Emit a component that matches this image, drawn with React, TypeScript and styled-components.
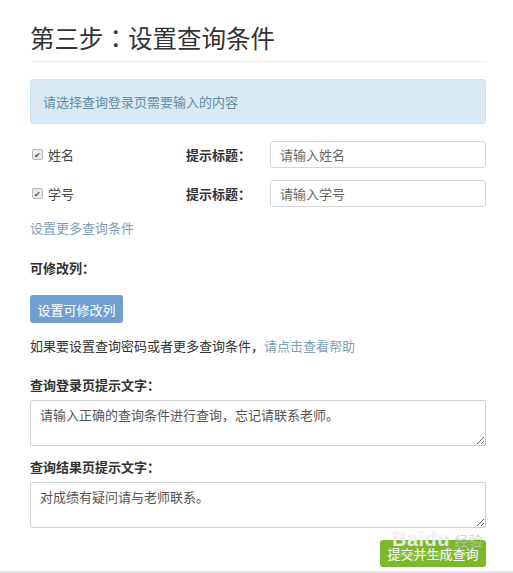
import React from "react";
import styled, { createGlobalStyle } from "styled-components";

const GlobalStyle = createGlobalStyle`
  body {
    margin: 0;
    background: #fff;
    font-family: "Noto Sans CJK SC", "Noto Sans", sans-serif;
    color: #333;
  }
`;

const Page = styled.div`
  position: relative;
  width: 513px;
  height: 573px;
  overflow: hidden;
  box-sizing: border-box;
  padding: 0 27px 0 30px;
  border-bottom: 2px solid #e3e3e3;
`;

const Title = styled.h1`
  margin: 20px 0 0;
  font-size: 24.5px;
  font-weight: 400;
  line-height: 36px;
  color: #333;
`;

const TitleColon = styled.span`
  font-family: "Noto Sans CJK TC", "Noto Sans CJK SC", sans-serif;
`;

const Divider = styled.hr`
  margin: 5px 0 0 2px;
  border: 0;
  border-top: 1px solid #ececec;
`;

const Alert = styled.div`
  margin-top: 17px;
  height: 45px;
  box-sizing: border-box;
  padding: 0 12px;
  display: flex;
  align-items: center;
  background: #daeaf4;
  border: 1px solid #cfe3ee;
  border-radius: 3px;
  color: #5f8ea6;
  font-size: 13px;
`;

const FieldRow = styled.div<{ $top: number }>`
  margin-top: ${(p) => p.$top}px;
  display: grid;
  grid-template-columns: 156px 84px 1fr;
  align-items: center;
  height: 26px;
`;

const CheckLabel = styled.label`
  display: flex;
  align-items: center;
  gap: 5px;
  font-size: 13px;
  color: #444;
  padding-left: 2px;
`;

const Check = styled.span`
  width: 9px;
  height: 9px;
  border: 1px solid #b9b9b9;
  border-radius: 2px;
  background: #e9e9e9;
  display: flex;
  align-items: center;
  justify-content: center;
  font-size: 8px;
  line-height: 1;
  color: #555;
`;

const HintLabel = styled.span`
  font-size: 13px;
  font-weight: 700;
  color: #333;
`;

const TextInput = styled.input`
  height: 27px;
  box-sizing: border-box;
  border: 1px solid #d6d6d6;
  border-radius: 3px;
  padding: 0 9px;
  font-family: inherit;
  font-size: 13px;
  color: #555;
  outline: none;
  &::placeholder {
    color: #666;
  }
`;

const LinkText = styled.a<{ $block?: boolean }>`
  color: #7c9fba;
  font-size: 13px;
  text-decoration: none;
  display: ${(p) => (p.$block ? "block" : "inline")};
`;

const MoreLink = styled(LinkText)`
  margin-top: 13px;
  line-height: 18px;
`;

const SectionLabel = styled.div<{ $top: number }>`
  margin-top: ${(p) => p.$top}px;
  font-size: 13px;
  font-weight: 700;
  line-height: 18px;
  color: #333;
`;

const BlueButton = styled.button`
  margin-top: 18px;
  width: 93px;
  height: 28px;
  border: 0;
  border-radius: 3px;
  background: #729fd2;
  color: #fff;
  font-family: inherit;
  font-size: 13px;
  padding: 0;
  display: block;
`;

const HelpLine = styled.p`
  margin: 14px 0 0;
  font-size: 13px;
  line-height: 18px;
  color: #333;
`;

const Area = styled.textarea<{ $top: number }>`
  display: block;
  margin-top: ${(p) => p.$top}px;
  width: 100%;
  height: 46px;
  box-sizing: border-box;
  border: 1px solid #d2d2d2;
  border-radius: 2px;
  padding: 5px 9px;
  font-family: inherit;
  font-size: 13px;
  line-height: 18px;
  color: #555;
  resize: vertical;
  outline: none;
`;

const Footer = styled.div`
  margin-top: 12px;
  display: flex;
  justify-content: flex-end;
`;

const GreenButton = styled.button`
  width: 106px;
  height: 27px;
  border: 0;
  border-radius: 3px;
  background: #7bb82c;
  color: #fff;
  font-family: inherit;
  font-size: 13px;
  padding: 0;
`;

const Watermark = styled.div`
  position: absolute;
  left: 392px;
  top: 529px;
  color: rgba(255, 255, 255, 0.75);
  font-family: "Liberation Sans", sans-serif;
  pointer-events: none;
  line-height: 1;
  & b {
    font-size: 20px;
    font-weight: 700;
    letter-spacing: 0.5px;
    text-shadow: 0 0 1px rgba(170, 170, 170, 0.6);
  }
  & span {
    font-size: 14px;
    color: rgba(200, 200, 200, 0.8);
    font-family: "Noto Sans CJK SC", sans-serif;
  }
  & small {
    position: absolute;
    left: 6px;
    top: 21px;
    font-size: 9px;
    color: rgba(210, 230, 200, 0.55);
    white-space: nowrap;
  }
`;

const fields = [
  { name: "姓名", placeholder: "请输入姓名", top: 17 },
  { name: "学号", placeholder: "请输入学号", top: 13 },
];

export default function App() {
  return (
    <Page>
      <GlobalStyle />
      <Title>
        第三步<TitleColon>：</TitleColon>设置查询条件
      </Title>
      <Divider />
      <Alert>请选择查询登录页需要输入的内容</Alert>
      {fields.map((f) => (
        <FieldRow key={f.name} $top={f.top}>
          <CheckLabel>
            <Check>✔</Check>
            {f.name}
          </CheckLabel>
          <HintLabel>提示标题：</HintLabel>
          <TextInput placeholder={f.placeholder} />
        </FieldRow>
      ))}
      <MoreLink $block>设置更多查询条件</MoreLink>
      <SectionLabel $top={22}>可修改列：</SectionLabel>
      <BlueButton>设置可修改列</BlueButton>
      <HelpLine>
        如果要设置查询密码或者更多查询条件，<LinkText>请点击查看帮助</LinkText>
      </HelpLine>
      <SectionLabel $top={21}>查询登录页提示文字：</SectionLabel>
      <Area $top={6} defaultValue="请输入正确的查询条件进行查询，忘记请联系老师。" />
      <SectionLabel $top={12}>查询结果页提示文字：</SectionLabel>
      <Area $top={6} defaultValue="对成绩有疑问请与老师联系。" />
      <Footer>
        <GreenButton>提交并生成查询</GreenButton>
      </Footer>
      <Watermark>
        <b>Baidu</b> <span>经验</span>
        <small>jingyan.baidu.com</small>
      </Watermark>
    </Page>
  );
}
